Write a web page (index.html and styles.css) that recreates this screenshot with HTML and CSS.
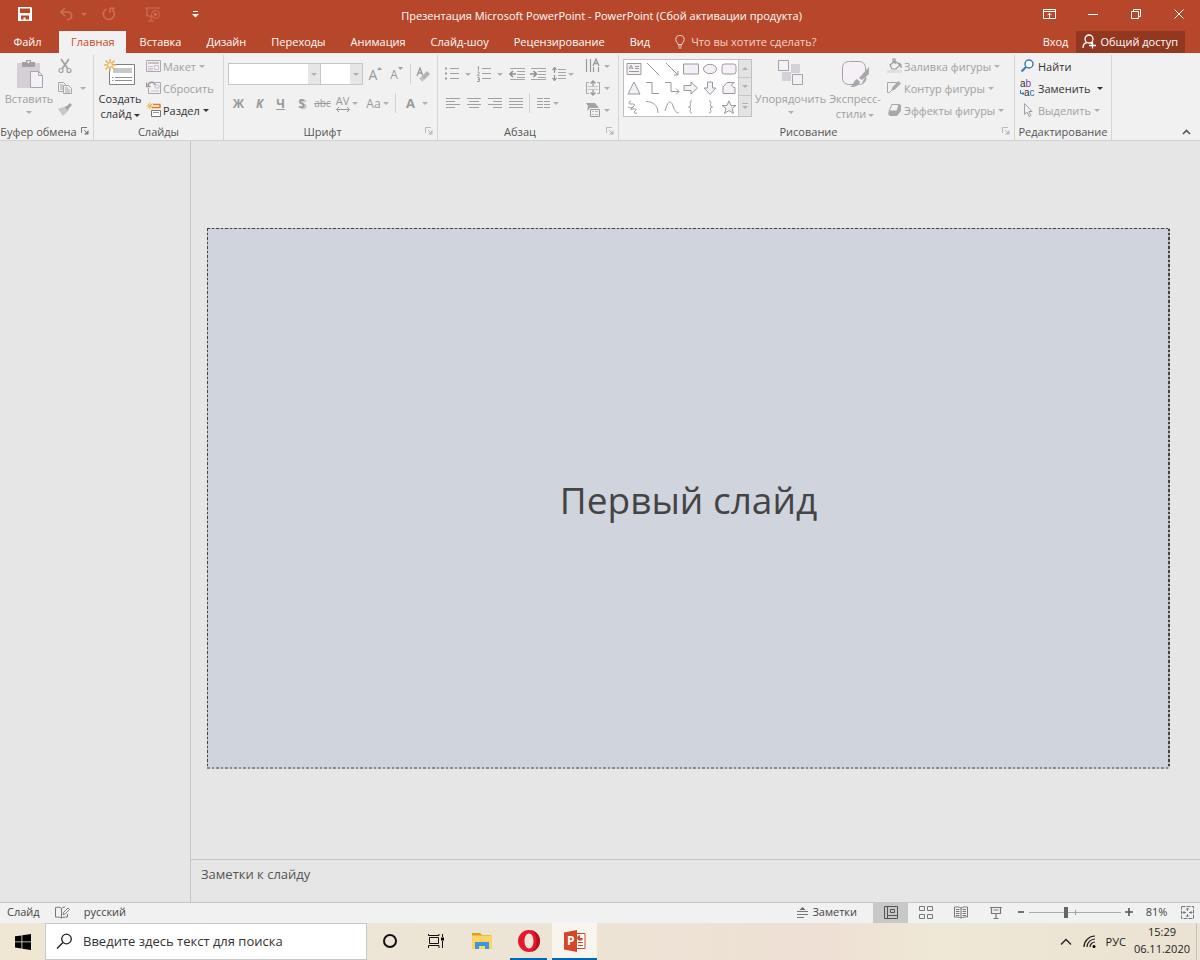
FILE: index.html
```html
<!DOCTYPE html>
<html lang="ru">
<head>
<meta charset="utf-8">
<title>Презентация Microsoft PowerPoint</title>
<link rel="stylesheet" href="styles.css">
</head>
<body>
<header class="titlebar">
  <div class="quick">
    <button class="qbtn" aria-label="Сохранить"><svg width="14" height="14" viewBox="0 0 14 14"><path d="M0 0h13l1 1v13H0z" fill="#fff"/><path d="M2 1.500h10v4.500H2zM3 8.500h8v4H7.500v-2H5.500v2H3z" fill="#b7472a"/></svg></button>
    <button class="qbtn undo faded" aria-label="Отменить"><svg width="14" height="14" viewBox="0 0 14 14"><path d="M5 1L1 5l4 4M1 5h7.500a3.800 3.800 0 0 1 0 7.500H7" fill="none" stroke="currentColor" stroke-width="1.600"/></svg><i class="caret"></i></button>
    <button class="qbtn faded" aria-label="Повторить"><svg width="14" height="14" viewBox="0 0 14 14"><path d="M4.500 2A5.500 5.500 0 1 0 10 2.500M8 6V1.200h5" fill="none" stroke="currentColor" stroke-width="1.600"/></svg></button>
    <button class="qbtn faded" aria-label="Начать показ"><svg width="16" height="15" viewBox="0 0 16 15"><path d="M0 1h15M2 1v8h4M6 9v5M3 14h6" fill="none" stroke="currentColor" stroke-width="1.200"/><circle cx="10.500" cy="7.500" r="4" fill="none" stroke="currentColor"/><path d="M9 5.200l4 2.300-4 2.300z" fill="currentColor"/></svg></button>
    <button class="qbtn custom" aria-label="Настроить панель"><svg width="7" height="7" viewBox="0 0 7 7"><path d="M1 .5h5" stroke="#fff"/><path d="M0 3h7L3.500 6.500z" fill="#fff"/></svg></button>
  </div>
  <div class="doc-title">Презентация Microsoft PowerPoint - PowerPoint (Сбой активации продукта)</div>
  <div class="window-buttons">
    <button class="wbtn" aria-label="Параметры ленты"><svg width="13" height="10" viewBox="0 0 13 10"><path d="M.5.5h12v9H.5zM.5 2.500h12M6.500 9V4.500M4.500 6.200l2-2 2 2" fill="none" stroke="#fff"/></svg></button>
    <button class="wbtn" aria-label="Свернуть"><svg width="10" height="10" viewBox="0 0 10 10"><path d="M0 5.500h10" stroke="#fff"/></svg></button>
    <button class="wbtn" aria-label="Восстановить"><svg width="10" height="10" viewBox="0 0 10 10"><path d="M.5 2.500h7v7h-7zM2.500 2.500v-2h7v7h-2" fill="none" stroke="#fff"/></svg></button>
    <button class="wbtn" aria-label="Закрыть"><svg width="10" height="10" viewBox="0 0 10 10"><path d="M.5.5l9 9M9.500.5l-9 9" stroke="#fff"/></svg></button>
  </div>
</header>

<nav class="tabs">
  <button class="tab file">Файл</button>
  <button class="tab active">Главная</button>
  <button class="tab">Вставка</button>
  <button class="tab">Дизайн</button>
  <button class="tab">Переходы</button>
  <button class="tab">Анимация</button>
  <button class="tab">Слайд-шоу</button>
  <button class="tab">Рецензирование</button>
  <button class="tab">Вид</button>
  <button class="tab tell"><svg width="10" height="14" viewBox="0 0 10 14"><path d="M3 9.500C3 7.500.8 7 .8 4.500a4.200 4 0 0 1 8.400 0C9.200 7 7 7.500 7 9.500zM3 11h4M3.500 13h3" fill="none" stroke="currentColor"/></svg>Что вы хотите сделать?</button>
  <span class="spacer"></span>
  <button class="tab login">Вход</button>
  <button class="share"><svg width="14" height="15" viewBox="0 0 14 15"><circle cx="7" cy="5" r="4" fill="none" stroke="#fff" stroke-width="1.300"/><path d="M1 14c0-3 1.500-5 4-5.500M8.500 8.500L10 10M10.500 8v6.500M7 11.500h7" fill="none" stroke="#fff" stroke-width="1.300"/></svg>Общий доступ</button>
</nav>

<section class="ribbon">
  <div class="group g-clip">
    <div class="group-body">
      <button class="big off">
        <svg width="32" height="32" viewBox="0 0 32 32"><path d="M4 5h23v25H4z" fill="#d3cfd4"/><path d="M9 4h4V2h5v2h4v5H9z" fill="#a3a0a3"/><circle cx="15.500" cy="4" r="1.200" fill="#eee"/><path d="M17.500 13.500h8l4 4v12h-12z" fill="#f5eff7" stroke="#a6a6a6"/><path d="M25.500 13.500v4h4" fill="none" stroke="#a6a6a6"/></svg>
        <span>Вставить</span><i class="caret"></i>
      </button>
      <div class="stack">
        <button class="small off" aria-label="Вырезать"><svg width="14" height="16" viewBox="1 0 14 16"><path d="M4 1l7 10M12 1L5 11" stroke="#a0a0a0" stroke-width="1.700"/><circle cx="4" cy="12.500" r="2" fill="none" stroke="#a0a0a0" stroke-width="1.200"/><circle cx="12" cy="12.500" r="2" fill="none" stroke="#a0a0a0" stroke-width="1.200"/></svg></button>
        <button class="small off" aria-label="Копировать"><svg width="14" height="16" viewBox="1 0 14 16"><path d="M1.500 2.500h5l2 2v7h-7z" fill="#f5eff7" stroke="#a6a6a6"/><path d="M6.500 5.500h5l3 3v5h-8z" fill="#f5eff7" stroke="#a6a6a6"/><path d="M3 5h3M3 7h3M3 9h3M8 8h3M8 10h5M8 12h5" stroke="#a6a6a6"/></svg><i class="caret wide"></i></button>
        <button class="small off" aria-label="Формат по образцу"><svg width="14" height="16" viewBox="1 0 14 16"><path d="M1 7l5-2 5 4-5 5z" fill="#cbc6cb"/><path d="M7 5l3-1 3-3 2 2-3 3-1 3z" fill="#a3a3a3"/></svg></button>
      </div>
    </div>
    <div class="group-label"><span>Буфер обмена</span><button class="launch dark" aria-label="Буфер обмена: параметры"><svg width="8" height="8" viewBox="0 0 8 8"><path d="M.5 6V.5H6M3 3l3 3" fill="none" stroke="currentColor"/><path d="M7.500 3v4.500H3z" fill="currentColor"/></svg></button></div>
  </div>

  <div class="group g-slides">
    <div class="group-body">
      <button class="big">
        <svg width="32" height="32" viewBox="4 0 32 32"><path d="M9.500 6.500h25v20h-25z" fill="#fff" stroke="#808080"/><path d="M13 10h19v5H13z" fill="#c7c7c7"/><path d="M15 19.500h17M15 22.500h17M12 19.500h1.500M12 22.500h1.500" stroke="#909090"/><path d="M10 1v12M4 7h12M5.500 2.500l9 9M14.500 2.500l-9 9" stroke="#edb55a" stroke-width="1.600"/><circle cx="10" cy="7" r="2.200" fill="#fff" stroke="#edb55a"/></svg>
        <span>Создать<br>слайд<i class="caret"></i></span>
      </button>
      <div class="stack">
        <button class="small off"><svg width="15" height="16" viewBox="0 0 15 16"><path d="M.5 2.500h14v11H.5z" fill="#f5eff7" stroke="#aaa"/><path d="M2 4h11v2H2z" fill="#c4c0c4"/><path d="M2 8.500h5M2 10.500h5M2 12h5M8.500 7.500h4v4h-4z" fill="none" stroke="#c6c2c7"/></svg><span>Макет</span><i class="caret"></i></button>
        <button class="small off"><svg width="15" height="16" viewBox="0 0 15 16"><path d="M2.500 8v5.500h12v-11H9" fill="#f5eff7" stroke="#aaa"/><path d="M9 5h4v3H9zM5 11h8" fill="none" stroke="#c4c0c4"/><path d="M2 5.500C3 1.500 8 1 9 5M.5 2.500v4h4" fill="none" stroke="#999" stroke-width="1.400"/></svg><span>Сбросить</span></button>
        <button class="small"><svg width="15" height="16" viewBox="0 0 15 16"><path d="M4 .5v7M.5 4h7M1.500 1.500l5 5M6.500 1.500l-5 5" stroke="#edb55a"/><path d="M7 2.500h7v3H6" fill="#fff" stroke="#e57a30" stroke-width="1.400"/><path d="M5.500 8.500h9v6h-9z" fill="#fff" stroke="#777"/><path d="M7 10.500h6" stroke="#999"/></svg><span>Раздел</span><i class="caret"></i></button>
      </div>
    </div>
    <div class="group-label"><span>Слайды</span></div>
  </div>

  <div class="group g-font">
    <div class="group-body rows">
      <div class="row">
        <span class="combo font-name"><input type="text" aria-label="Шрифт"><button aria-label="Список шрифтов"><i class="caret"></i></button></span>
        <span class="combo font-size"><input type="text" aria-label="Размер шрифта"><button aria-label="Список размеров"><i class="caret"></i></button></span>
        <button class="tool grow">А<svg width="5" height="3" viewBox="0 0 5 3"><path d="M0 3h5L2.500 0z" fill="#a0a0a0"/></svg></button>
        <button class="tool shrink">А<svg width="5" height="3" viewBox="0 0 5 3"><path d="M0 0h5L2.500 3z" fill="#a0a0a0"/></svg></button>
        <i class="rule"></i>
        <button class="tool clear" aria-label="Очистить формат"><svg width="15" height="15" viewBox="0 0 15 15"><path d="M1 9l3-8 2.500 7M2 6h4" fill="none" stroke="#999" stroke-width="1.300"/><path d="M5 10l6-6 3 3-6 6z" fill="#b5b0b5"/><path d="M3 11l2-1 3 3-2 1.500z" fill="#c4bfc4"/></svg></button>
      </div>
      <div class="row">
        <button class="tool"><b>Ж</b></button>
        <button class="tool"><b><em>К</em></b></button>
        <button class="tool"><b><u>Ч</u></b></button>
        <button class="tool shadow"><b>S</b></button>
        <button class="tool strike">abc</button>
        <button class="tool drop spacing"><span class="kern">AV<svg width="14" height="5" viewBox="0 0 14 5"><path d="M.5 2.500h13M3 0L.5 2.500 3 5M11 0l2.500 2.500L11 5" fill="none" stroke="#999"/></svg></span><i class="caret"></i></button>
        <button class="tool drop case">Aa<i class="caret"></i></button>
        <i class="rule"></i>
        <button class="tool drop color"><b>А</b><i class="caret"></i></button>
      </div>
    </div>
    <div class="group-label"><span>Шрифт</span><button class="launch" aria-label="Шрифт: параметры"><svg width="8" height="8" viewBox="0 0 8 8"><path d="M.5 6V.5H6M3 3l3 3" fill="none" stroke="currentColor"/><path d="M7.500 3v4.500H3z" fill="currentColor"/></svg></button></div>
  </div>

  <div class="group g-para">
    <div class="group-body">
      <div class="rows">
        <div class="row">
          <button class="tool drop list" aria-label="Маркеры"><svg width="14" height="14" viewBox="0 0 14 14"><path d="M5 1.500h9M5 6.500h9M5 11.500h9" stroke="#a0a0a0"/><path d="M0 .5h2v2H0zM0 5.500h2v2H0zM0 10.500h2v2H0z" fill="#999"/></svg><i class="caret wide"></i></button>
          <button class="tool drop list" aria-label="Нумерация"><svg width="14" height="16" viewBox="0 0 14 16"><path d="M5 2.500h9M5 7.500h9M5 12.500h9" stroke="#a0a0a0"/><path d="M.5 1.500l1-1v4M.3 6h1.700v1.500L.5 9.500H2.500M.3 11.500h2v4H0M.8 13.500h1.500" fill="none" stroke="#999"/></svg><i class="caret wide"></i></button>
          <button class="tool" aria-label="Уменьшить отступ"><svg width="16" height="14" viewBox="0 0 16 14"><path d="M1 1.500h15M8 4.500h8M8 7.500h8M8 10.500h8M1 12.500h15" stroke="#a6a6a6"/><path d="M7 7H1.500M4 4L1 7l3 3" fill="none" stroke="#909090" stroke-width="1.600"/></svg></button>
          <button class="tool" aria-label="Увеличить отступ"><svg width="16" height="14" viewBox="0 0 16 14"><path d="M1 1.500h15M8 4.500h8M8 7.500h8M8 10.500h8M1 12.500h15" stroke="#a6a6a6"/><path d="M0 7h6M3.500 4l3 3-3 3" fill="none" stroke="#909090" stroke-width="1.600"/></svg></button>
          <button class="tool drop line" aria-label="Интервал"><svg width="14" height="14" viewBox="0 0 14 14"><path d="M6 2.500h8M6 5.500h8M6 8.500h8M6 11.500h8" stroke="#a6a6a6"/><path d="M2.500 0v6M2.500 8v6M.5 3l2-2.500 2 2.500M.5 11l2 2.500 2-2.500" fill="none" stroke="#909090" stroke-width="1.200"/></svg><i class="caret"></i></button>
        </div>
        <div class="row">
          <button class="tool" aria-label="По левому краю"><svg width="14" height="12" viewBox="0 0 14 12"><path d="M0 1.500h14M0 4.500h9M0 7.500h14M0 10.500h9" stroke="#a0a0a0"/></svg></button>
          <button class="tool" aria-label="По центру"><svg width="14" height="12" viewBox="0 0 14 12"><path d="M0 1.500h14M2 4.500h10M0 7.500h14M2 10.500h10" stroke="#a0a0a0"/></svg></button>
          <button class="tool" aria-label="По правому краю"><svg width="14" height="12" viewBox="0 0 14 12"><path d="M0 1.500h14M5 4.500h9M0 7.500h14M5 10.500h9" stroke="#a0a0a0"/></svg></button>
          <button class="tool" aria-label="По ширине"><svg width="14" height="12" viewBox="0 0 14 12"><path d="M0 1.500h14M0 4.500h14M0 7.500h14M0 10.500h14" stroke="#a0a0a0"/></svg></button>
          <i class="rule"></i>
          <button class="tool drop" aria-label="Колонки"><svg width="14" height="12" viewBox="0 0 14 12"><path d="M0 1.500h6M0 4.500h6M0 7.500h6M0 10.500h6M7 1.500h6M7 4.500h6M7 7.500h6M7 10.500h6" stroke="#a0a0a0"/></svg><i class="caret"></i></button>
        </div>
      </div>
      <div class="stack">
        <button class="small off" aria-label="Направление текста"><svg width="16" height="16" viewBox="0 0 16 16"><path d="M1.500 1v13M5.500 1v13M8.500 9v5M13.500 9v5" stroke="#999" stroke-width="1.200"/><path d="M8 8l3-7 3 7M9 5.500h4" fill="none" stroke="#999" stroke-width="1.300"/></svg><i class="caret"></i></button>
        <button class="small off" aria-label="Выровнять текст"><svg width="16" height="16" viewBox="0 0 16 16"><path d="M4 2.500H1.500v11H4M12 2.500h2.500v11H12" fill="none" stroke="#a6a6a6"/><path d="M3 6.500h10M3 9.500h10" stroke="#c9bfcc"/><path d="M8 1v5M8 10v5M5.500 3.500L8 1l2.500 2.500M5.500 12.500L8 15l2.500-2.500" fill="none" stroke="#999" stroke-width="1.300"/></svg><i class="caret"></i></button>
        <button class="small off" aria-label="Преобразовать в SmartArt"><svg width="16" height="16" viewBox="0 0 16 16"><path d="M1 1h9l4 5H5L2 9l1-5z" fill="#a3a3a3"/><path d="M5.500 7.500h9v7h-9z" fill="#f5eff7" stroke="#999"/><path d="M7 9.500h2M10 9.500h3M7 12.500h2M10 12.500h3" stroke="#bbb"/></svg><i class="caret"></i></button>
      </div>
    </div>
    <div class="group-label"><span>Абзац</span><button class="launch" aria-label="Абзац: параметры"><svg width="8" height="8" viewBox="0 0 8 8"><path d="M.5 6V.5H6M3 3l3 3" fill="none" stroke="currentColor"/><path d="M7.500 3v4.500H3z" fill="currentColor"/></svg></button></div>
  </div>

  <div class="group g-draw">
    <div class="group-body">
      <div class="gallery">
        <div class="shapes">
          <svg viewBox="0 0 16 14"><path d="M1 1.500h14v11H1z"/><path d="M3 7l2-4 2 4M3.500 6h3M9 4.500h4M9 6.500h4M3 9.500h10"/></svg>
          <svg viewBox="0 0 16 14"><path d="M2 1l12 12"/></svg>
          <svg viewBox="0 0 16 14"><path d="M2 1l12 12M14 9v4h-4"/></svg>
          <svg viewBox="0 0 16 14"><path d="M.5 2h15v10H.5z"/></svg>
          <svg viewBox="0 0 16 14"><ellipse cx="8" cy="7" rx="6.500" ry="4.700"/></svg>
          <svg viewBox="0 0 16 14"><rect x="1" y="2" width="14" height="10" rx="2.500"/></svg>
          <svg viewBox="0 0 16 14"><path d="M8 1l6 12H2z"/></svg>
          <svg viewBox="0 0 16 14"><path d="M1 1.500h6v11h7" fill="none"/></svg>
          <svg viewBox="0 0 16 14"><path d="M1 1.500h6v9h8M12 7.500l3 3-3 3" fill="none"/></svg>
          <svg viewBox="0 0 16 14"><path d="M1 4.500h7V1l6.500 6L8 13V9.500H1z"/></svg>
          <svg viewBox="0 0 16 14"><path d="M5.500 1v6H2l6 6.500L14 7h-3.500V1z"/></svg>
          <svg viewBox="0 0 16 14"><path d="M2 6l4-4.500h7.500C10 3 10 6 14 6.500v6H2z"/></svg>
          <svg viewBox="0 0 16 14"><path d="M5 1C2 2 2 4 5 4s5 0 2 3-3 3 0 2 4 1 2 2 0 3 2 2M2 7c2 1 3 1 5 0" fill="none"/></svg>
          <svg viewBox="0 0 16 14"><path d="M1 1.500c6 0 12 3 12 11.500" fill="none"/></svg>
          <svg viewBox="0 0 16 14"><path d="M1 11C4 0 7 0 9 6s4 7 6 7" fill="none"/></svg>
          <svg viewBox="0 0 16 14"><path d="M9 1C6 1 7.500 3.500 7.500 5S7 7 5.500 7C7 7 7.500 7.500 7.500 9S6 13 9 13" fill="none"/></svg>
          <svg viewBox="0 0 16 14"><path d="M7 1c3 0 1.500 2.500 1.500 4S9 7 10.500 7C9 7 8.500 7.500 8.500 9S10 13 7 13" fill="none"/></svg>
          <svg viewBox="0 0 16 14"><path d="M8 .8l2 4.700h5l-4 3 1.500 5L8 10.500l-4.500 3 1.500-5-4-3h5z"/></svg>
        </div>
        <div class="gallery-scroll">
          <button aria-label="Вверх"><i class="caret up"></i></button>
          <button aria-label="Вниз"><i class="caret"></i></button>
          <button class="more" aria-label="Ещё"><i class="caret"></i></button>
        </div>
      </div>
      <button class="big off arrange">
        <svg width="32" height="32" viewBox="0 0 32 32"><path d="M16 6h9v9h-9zM7 14h9v9H7z" fill="#d6d1d6"/><path d="M3.500 2.500h10v10h-10zM17.500 16.500h10v10h-10z" fill="#f5eff7" stroke="#a3a3a3"/></svg>
        <span>Упорядочить</span><i class="caret"></i>
      </button>
      <button class="big off styles">
        <svg width="32" height="32" viewBox="0 0 32 32"><rect x="3.500" y="3.500" width="23" height="23" rx="6" fill="#f5eff7" stroke="#a3a3a3"/><path d="M30 9v7l-7 6-3-2zM18 21l3 3c-1 4-5 5-10 5 4-2 3-6 7-8z" fill="#a8a8a8"/><path d="M27 20l-3 5" stroke="#a8a8a8" stroke-width="2"/></svg>
        <span>Экспресс-<br>стили<i class="caret"></i></span>
      </button>
      <div class="stack">
        <button class="small off"><svg width="15" height="16" viewBox="0 0 15 16"><path d="M0 12h15v3H0z" fill="#e3dde4"/><path d="M3 7l5-4 5 4-4 4H5zM6 5V1h2v5M12 5l2 2v3" fill="none" stroke="#999" stroke-width="1.200"/></svg><span>Заливка фигуры</span><i class="caret"></i></button>
        <button class="small off"><svg width="15" height="16" viewBox="0 0 15 16"><path d="M10 2.500H.5v10h2l3-3" fill="none" stroke="#a6a6a6"/><path d="M4 11l1.500-4 6-6L14 3.500l-6 6z" fill="#aaa"/></svg><span>Контур фигуры</span><i class="caret"></i></button>
        <button class="small off"><svg width="15" height="16" viewBox="0 0 15 16"><path d="M5 2h7l2 1v6l-4 5H3l-2-2 1-3z" fill="#a8a8a8"/><path d="M5 2.500h7L10 9H2z" fill="#f5eff7" stroke="#a6a6a6"/></svg><span>Эффекты фигуры</span><i class="caret"></i></button>
      </div>
    </div>
    <div class="group-label"><span>Рисование</span><button class="launch" aria-label="Рисование: параметры"><svg width="8" height="8" viewBox="0 0 8 8"><path d="M.5 6V.5H6M3 3l3 3" fill="none" stroke="currentColor"/><path d="M7.500 3v4.500H3z" fill="currentColor"/></svg></button></div>
  </div>

  <div class="group g-edit">
    <div class="group-body">
      <div class="stack">
        <button class="small"><svg width="16" height="16" viewBox="0 0 16 16"><circle cx="9" cy="6" r="4" fill="#fff" stroke="#3d7ab8" stroke-width="1.500"/><path d="M6 9l-4.500 4.500" stroke="#3d7ab8" stroke-width="2.200"/></svg><span>Найти</span></button>
        <button class="small replace"><span class="abac"><span>a<i class="violet">b</i></span><span class="second"><svg width="4" height="5" viewBox="0 0 4 5"><path d="M.5 0v3.500H4M2.500 2L4 3.500 2.500 5" fill="none" stroke="#2f73b8"/></svg>a<i class="blue">c</i></span></span><span class="grow-text">Заменить</span><i class="caret"></i></button>
        <button class="small off"><svg width="16" height="16" viewBox="0 0 16 16"><path d="M4.500 1.500v11l2.500-2.500 2 4.500 1.800-1-2-4h3.200z" fill="#f5eff7" stroke="#a0a0a0"/></svg><span>Выделить</span><i class="caret"></i></button>
      </div>
    </div>
    <div class="group-label"><span>Редактирование</span></div>
  </div>
  <button class="collapse" aria-label="Свернуть ленту"><svg width="9" height="6" viewBox="0 0 9 6"><path d="M1 5l3.500-3.500L8 5" fill="none" stroke="#555" stroke-width="1.600"/></svg></button>
</section>

<main class="workspace">
  <aside class="thumbs"></aside>
  <section class="editor">
    <div class="stage">
      <div class="slide"><h1>Первый слайд</h1></div>
    </div>
    <div class="notes">Заметки к слайду</div>
  </section>
</main>

<footer class="status">
  <span>Слайд</span>
  <button class="proof" aria-label="Правописание"><svg width="15" height="13" viewBox="0 0 15 13"><path d="M6.500 12V2.500C5 1 3 1 .5 1.500v9.500c2.500 0 4.500 0 6 1zM6.500 2.500C7.500 1.500 8.500 1 10 1M6.500 12c1.500-1 4-1 6-1V8" fill="none" stroke="#777"/><path d="M8 8.500l.7-2.200L13 2l1.500 1.500-4.300 4.300z" fill="#fff" stroke="#777"/></svg></button>
  <button>русский</button>
  <span class="spacer"></span>
  <button class="notes-btn"><svg width="11" height="12" viewBox="0 0 11 12"><path d="M0 5.500h11M0 8.500h11M0 11.500h7" stroke="#777"/><path d="M2.500 4h6l-3-3z" fill="#666"/></svg>Заметки</button>
  <button class="view on" aria-label="Обычный"><svg width="14" height="13" viewBox="0 0 14 13"><path d="M.5.5h13v12H.5zM3.500.5v12M3.500 9.500h10M6.500 3.500h4v3h-4z" fill="none" stroke="#555"/></svg></button>
  <button class="view" aria-label="Сортировщик"><svg width="14" height="13" viewBox="0 0 14 13"><path d="M.5.5h5v4h-5zM8.500.5h5v4h-5zM.5 8.500h5v4h-5zM8.500 8.500h5v4h-5z" fill="none" stroke="#777"/></svg></button>
  <button class="view" aria-label="Режим чтения"><svg width="14" height="13" viewBox="0 0 14 13"><path d="M7 12V2C5 .8 3 .8.500 1v10c2.500 0 4.500 0 6.500 1 2-1 4-1 6.500-1V1C11 .8 9 .8 7 2M2 3.500h3.500M2 5.500h3.500M2 7.500h3.500M2 9.500h3.500M8.500 3.500H12M8.500 5.500H12M8.500 7.500H12M8.500 9.500H12" fill="none" stroke="#777"/></svg></button>
  <button class="view" aria-label="Показ слайдов"><svg width="12" height="13" viewBox="0 0 12 13"><path d="M0 1.500h12M1.500 1.500v6h9v-6M6 7.500v5M3.500 12.500h5M3.500 4h5" fill="none" stroke="#777" stroke-width="1.200"/></svg></button>
  <button class="zoom-step" aria-label="Уменьшить"><svg width="8" height="8" viewBox="0 0 8 8"><path d="M1 4h6" stroke="#555" stroke-width="1.600"/></svg></button>
  <input class="zoom" type="range" min="0" max="100" value="40" aria-label="Масштаб">
  <button class="zoom-step" aria-label="Увеличить"><svg width="8" height="8" viewBox="0 0 8 8"><path d="M0 4h8M4 0v8" stroke="#555" stroke-width="1.600"/></svg></button>
  <button class="percent">81%</button>
  <button class="fit" aria-label="Вписать"><svg width="13" height="13" viewBox="0 0 13 13"><path d="M.5.5h12v12H.5z" fill="none" stroke="#777" stroke-dasharray="4 1"/><path d="M6.500 2v3M6.500 8v3M2 6.500h3M8 6.500h3M5 3.500L6.500 2 8 3.500M5 9.500L6.500 11 8 9.500M3.500 5L2 6.500 3.500 8M9.500 5L11 6.500 9.500 8" fill="none" stroke="#777"/></svg></button>
</footer>

<div class="taskbar">
  <button class="start" aria-label="Пуск"><svg width="16" height="16" viewBox="0 0 16 16"><path d="M0 2.300l6.500-.9v6.100H0zM7.300 1.300L16 0v7.500H7.300zM0 8.300h6.500v6.200L0 13.600zM7.300 8.300H16V16l-8.700-1.300z"/></svg></button>
  <label class="search"><svg width="17" height="17" viewBox="0 0 17 17"><circle cx="10.500" cy="6" r="4.800" fill="none" stroke="#222" stroke-width="1.300"/><path d="M7 9.500L1 15.500" stroke="#222" stroke-width="1.400"/></svg><input type="text" placeholder="Введите здесь текст для поиска" aria-label="Поиск"></label>
  <button class="app" aria-label="Кортана"><svg width="16" height="16" viewBox="0 0 16 16"><circle cx="8" cy="8" r="6" fill="none" stroke="#111" stroke-width="2"/></svg></button>
  <button class="app" aria-label="Представление задач"><svg width="16" height="16" viewBox="0 0 16 16"><path d="M1.500 4.500h9v6h-9zM.5 1v1.500H11V1M.5 15v-2.500H11V15M14.500 1v3M14.500 8v7" fill="none" stroke="#111"/><path d="M13 4.500h3v3h-3z"/></svg></button>
  <button class="app" aria-label="Проводник"><svg width="22" height="20" viewBox="0 0 22 20"><path d="M1 2h8l2 2h9v4H1z" fill="#d9a21a"/><path d="M1 4.500h20V18H1z" fill="#fbd465"/><path d="M4 18v-7h14v7h-4v-3H8v3z" fill="#3a96dd"/></svg></button>
  <button class="app open" aria-label="Opera"><svg width="22" height="22" viewBox="0 0 22 22"><path fill-rule="evenodd" d="M11 0a11 11 0 1 0 0 22 11 11 0 0 0 0-22zm0 3.500c2.700 0 4.500 3.400 4.500 7.500s-1.800 7.500-4.500 7.500S6.500 15.100 6.500 11s1.800-7.500 4.500-7.500z" fill="#e5182d"/><path d="M13 .2c12 2 12 19.600 0 21.600 4-2 5.500-6 5.500-10.800S17 2.200 13 .2z" fill="#b70f20"/></svg></button>
  <button class="app open current" aria-label="PowerPoint"><svg width="22" height="22" viewBox="0 0 22 22"><path d="M12 3.500h9v15h-9z" fill="#fff" stroke="#d24726"/><path d="M14 12.500h5M14 15.500h5" stroke="#d24726"/><circle cx="16" cy="8" r="2.800" fill="#d24726"/><path d="M16 8V4.500A3 3 0 0 1 19 8z" fill="#fff"/><path d="M0 2.500L13 0v22L0 19.500z" fill="#d24726"/><text x="3" y="15" class="pp">P</text></svg></button>
  <span class="spacer"></span>
  <button class="tray" aria-label="Скрытые значки"><svg width="12" height="7" viewBox="0 0 12 7"><path d="M1 6.500l5-5 5 5" fill="none" stroke="#222" stroke-width="1.300"/></svg></button>
  <button class="tray" aria-label="Сеть"><svg width="13" height="13" viewBox="0 0 13 13"><path d="M1 12A11 11 0 0 1 12 1M4 12a8 8 0 0 1 8-8M7 12a5 5 0 0 1 5-5" fill="none" stroke="#222" stroke-width="1.200"/><circle cx="11" cy="11.500" r="1.500"/></svg></button>
  <button class="lang">РУС</button>
  <div class="clock"><span>15:29</span><span>06.11.2020</span></div>
</div>
</body>
</html>
```
FILE: styles.css
```css
* { box-sizing: border-box; }
body {
  margin: 0;
  min-height: 100vh;
  display: flex;
  flex-direction: column;
  font: 11px/15px "Open Sans", "Noto Sans", sans-serif;
  color: #333;
  background: #e6e6e6;
}
button, input { font: inherit; color: inherit; border: 0; padding: 0; margin: 0; background: none; }
button { display: flex; align-items: center; justify-content: center; white-space: nowrap; }
svg { flex: none; display: block; }
.spacer { flex: 1; }
.caret {
  display: inline-block;
  flex: none;
  width: 0;
  height: 0;
  border: 3px solid transparent;
  border-top-color: currentColor;
  border-bottom: 0;
  margin-left: 2px;
  vertical-align: middle;
}
.caret.up { transform: rotate(180deg); }

.titlebar { display: flex; height: 31px; background: #b7472a; color: #fff; }
.quick { flex: 1; display: flex; align-items: center; padding: 0 0 3px 3px; }
.qbtn { width: 44px; height: 28px; }
.qbtn.undo { width: 40px; padding-left: 12px; }
.qbtn.custom { width: 40px; }
.undo .caret { margin-left: 7px; }
.faded { color: #cb6f57; }
.doc-title { line-height: 31px; }
.window-buttons { flex: 1; display: flex; justify-content: flex-end; padding-bottom: 3px; }
.wbtn { width: 43px; }

.tabs { display: flex; height: 22px; background: #b7472a; color: #fff; }
.tab { padding: 0 12px 1px 13px; }
.tab.file { width: 59px; padding-right: 17px; }
.tab.active { background: #f1f1f1; color: #d24726; padding: 0 11px 1px 12px; margin-right: 1px; }
.tab.tell { gap: 6px; color: #f3d5cc; }
.tab.login { padding: 0 8px 1px; }
.share { background: #923720; gap: 4px; padding: 0 7px 1px 6px; margin-right: 15px; }

.ribbon { display: flex; background: #f1f1f1; border-bottom: 1px solid #d2d2d2; padding-top: 2px; }
.group { display: flex; flex-direction: column; border-right: 1px solid #d5d5d5; flex: none; }
.group-body { display: flex; height: 66px; }
.group-label { display: flex; height: 18px; align-items: center; color: #555; margin-bottom: 1px; padding-top: 2px; }
.group-label span { flex: 1; text-align: center; white-space: nowrap; }
.launch { width: 16px; color: #bbb; }
.launch.dark { color: #777; }
.g-clip { width: 94px; }
.g-slides { width: 130px; }
.g-font { width: 214px; }
.g-para { width: 181px; }
.g-draw { width: 396px; }
.g-edit { width: 97px; }
.off { color: #a0a0a0; }
.big { flex-direction: column; justify-content: flex-start; width: 58px; padding-top: 3px; text-align: center; }
.big svg { margin-bottom: 1px; }
.big > .caret { margin: 5px 0 0; }
.stack { display: grid; grid-template-rows: repeat(3, 22px); }
.small { justify-content: flex-start; gap: 2px; }
.small .caret { margin-left: 1px; }
.small .caret.wide, .list .caret.wide { margin-left: 6px; }
.g-slides .big { width: 52px; }

.rows { display: flex; flex-direction: column; padding-top: 8px; gap: 7px; }
.row { display: flex; align-items: center; height: 22px; }
.g-font .rows { padding-left: 4px; }
.tool { width: 21px; height: 22px; color: #999; }
.tool.drop { width: 29px; }
.tool.list { width: 32px; }
.off .caret, .tool .caret, .combo .caret, .gallery-scroll .caret { color: #b0b0b0; }
.rule { width: 1px; height: 20px; background: #d2d2d2; margin: 0 3px; }
.combo { display: flex; height: 22px; background: #fff; border: 1px solid #c6c6c6; }
.combo input { flex: 1; min-width: 0; }
.combo button { width: 12px; background: #e6e6e6; }
.combo .caret, .gallery-scroll .caret { margin: 0; }
.font-name { width: 93px; }
.font-size { width: 42px; border-left: 0; }
.grow { font-size: 14px; margin-left: 2px; }
.shrink { font-size: 12px; }
.grow svg, .shrink svg { align-self: flex-start; margin-top: 4px; }
.tool.clear { width: 19px; }
.tool b { font-size: 12px; }
.shadow { text-shadow: 2px 1px 1px #bbb; }
.strike { text-decoration: line-through; font-size: 10px; }
.kern { display: flex; flex-direction: column; align-items: center; line-height: 12px; }
.tool.drop.spacing { width: 27px; }
.tool.case { font-size: 12px; margin-left: 3px; }
.tool.drop.color { width: 36px; }
.tool.color b { font-size: 13px; }
.tool.color .caret { margin-left: 7px; }
.g-para .row { padding-left: 4px; }
.g-para .group-body { gap: 8px; }

.gallery { display: flex; width: 129px; height: 58px; margin: 4px 4px 0; border: 1px solid #c0c0c0; background: #fff; }
.shapes { flex: 1; display: grid; grid-template: repeat(3, 1fr) / repeat(6, 1fr); place-items: center; }
.shapes svg { width: 16px; height: 14px; fill: #f5eff7; stroke: #999; }
.gallery-scroll { width: 13px; display: grid; background: #e3e3e3; border-left: 1px solid #c6c6c6; }
.gallery-scroll button { border-bottom: 1px solid #c6c6c6; }
.gallery-scroll .more { border-bottom: 0; flex-direction: column; }
.more::before { content: ""; width: 6px; height: 1px; margin-bottom: 2px; background: #b0b0b0; }
.big.arrange { width: 69px; }
.big.styles { width: 60px; }
.g-draw .stack { padding-left: 2px; }
.g-edit .stack { flex: 1; padding: 0 8px 0 5px; }
.abac { display: flex; flex-direction: column; align-items: flex-start; width: 16px; font: 10px/9px "Liberation Sans", sans-serif; }
.abac i { font-style: normal; }
.second { display: flex; align-items: center; }
.violet { color: #8040b0; }
.blue { color: #2f73b8; }
.grow-text { flex: 1; text-align: left; }
.collapse { align-self: flex-end; margin: 0 9px 5px auto; }

.workspace { flex: 1; display: flex; }
.thumbs { width: 191px; border-right: 1px solid #c6c6c6; }
.editor { flex: 1; display: flex; flex-direction: column; }
.stage { flex: 1; display: flex; padding: 87px 30px 90px 16px; }
.slide {
  flex: 1;
  display: flex;
  align-items: center;
  justify-content: center;
  --dash: #444 0 3px, #b4b7be 3px 5px, #444 5px 7px, #b4b7be 7px 9px;
  --soft: #888b92 0 3px, #d0d4dd 3px 5px, #888b92 5px 7px, #d0d4dd 7px 9px;
  background:
    repeating-linear-gradient(90deg, var(--dash)) top / 100% 1px no-repeat,
    repeating-linear-gradient(90deg, var(--soft)) bottom / 100% 2px no-repeat,
    repeating-linear-gradient(var(--dash)) left / 1px 100% no-repeat,
    repeating-linear-gradient(var(--dash)) right / 2px 100% no-repeat,
    #d0d4dd;
}
.slide h1 { margin: 0; padding-top: 2px; font-size: 37px; font-weight: 400; line-height: 54px; color: #444; }
.notes { height: 43px; border-top: 1px solid #c6c6c6; padding: 6px 10px; font-size: 13px; line-height: 17px; color: #555; }

.status { display: flex; align-items: stretch; height: 21px; background: #f1f1f1; border-top: 1px solid #c6c6c6; line-height: 18px; color: #444; padding: 0 6px 0 7px; }
.status button { padding-bottom: 2px; }
.proof { margin: 0 14px 0 15px; }
.notes-btn { gap: 4px; margin-right: 16px; }
.view { width: 35px; }
.view.on { background: #c8c8c8; }
.zoom-step { width: 16px; }
.zoom {
  appearance: none;
  height: 18px;
  width: 92px;
  background:
    linear-gradient(#999, #999) center / 1px 5px no-repeat,
    linear-gradient(#aaa, #aaa) center / 100% 1px no-repeat;
}
.zoom::-webkit-slider-thumb { appearance: none; width: 4px; height: 11px; background: #666; }
.percent { width: 39px; }
.fit { margin-left: 5px; }

.taskbar { display: flex; height: 37px; background: linear-gradient(90deg, #efe6d4, #ece5d6 40%, #eee0d4 68%, #eee8d6 78%, #eae2d2); color: #222; }
.start { width: 45px; }
.search { display: flex; align-items: center; gap: 10px; width: 322px; background: #fff; border: 1px solid #c8c8c8; padding-left: 10px; }
.search input { flex: 1; min-width: 0; font-size: 13px; outline: 0; }
.search input::placeholder { color: #333; opacity: 1; }
.app { width: 46px; border-bottom: 2px solid transparent; }
.app.open { width: 37px; border-color: #0067b8; margin: 0 5px; }
.app.current { width: 45px; margin: 0; background: #f8f4ee; }
.pp { font: bold 12px "Open Sans", sans-serif; fill: #fff; }
.tray { width: 24px; }
.lang { margin: 0 8px 0 4px; }
.clock { display: flex; flex-direction: column; align-items: center; justify-content: center; line-height: 17px; margin-right: 3px; padding: 0 6px 3px 0; border-right: 1px solid #c6c0b4; }
```
